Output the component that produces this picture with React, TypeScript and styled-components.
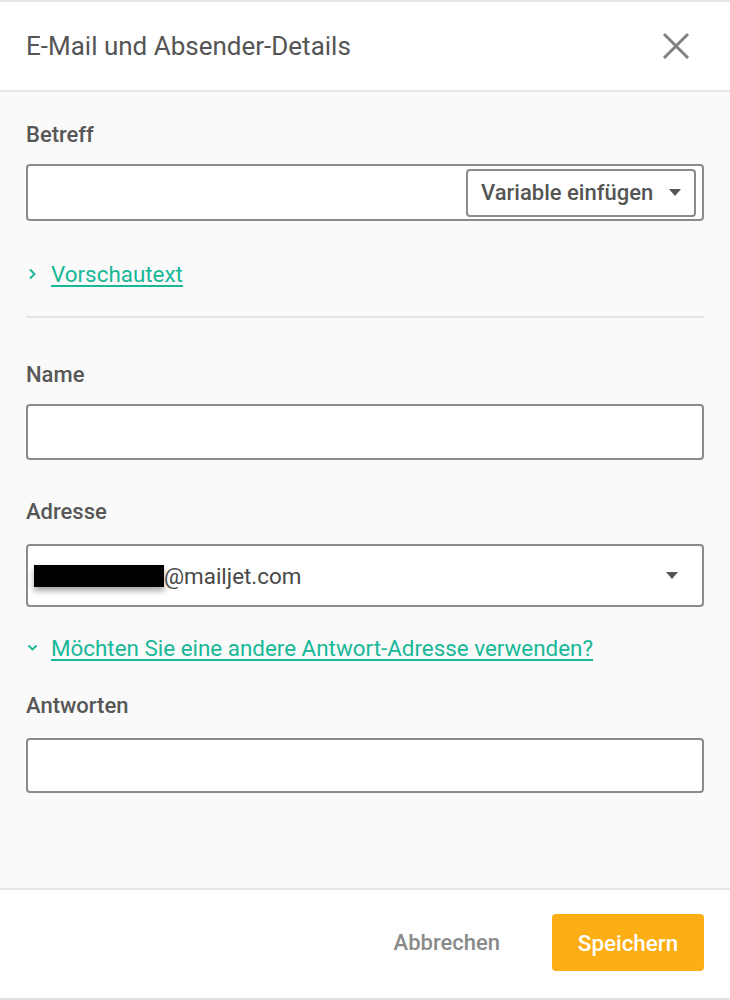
import React from "react";
import styled, { createGlobalStyle } from "styled-components";

const Global = createGlobalStyle`
  html, body { margin: 0; padding: 0; background: #ffffff; }
  body { font-family: Roboto, "Noto Sans", Arial, sans-serif; -webkit-font-smoothing: antialiased; }
  * { box-sizing: border-box; }
`;

const Modal = styled.div`
  width: 730px;
  height: 1000px;
  display: flex;
  flex-direction: column;
  background: #fafafa;
  border-top: 2px solid #e6e6e6;
  border-bottom: 2px solid #e2e2e2;
`;

const Header = styled.header`
  height: 90px;
  flex: none;
  background: #ffffff;
  border-bottom: 2px solid #e6e6e6;
  display: flex;
  align-items: center;
  justify-content: space-between;
  padding: 0 40px 0 26px;
`;

const Title = styled.h1`
  margin: 0;
  font-size: 26px;
  font-weight: 400;
  color: #555555;
`;

const CloseButton = styled.button`
  border: 0;
  background: none;
  padding: 0;
  width: 28px;
  height: 28px;
  display: flex;
  align-items: center;
  justify-content: center;
  cursor: pointer;
`;

const Body = styled.main`
  flex: 1;
  padding: 30px 26px 0 26px;
  display: flex;
  flex-direction: column;
`;

const Label = styled.label<{ $top?: number }>`
  display: block;
  margin-top: ${(p) => p.$top ?? 0}px;
  font-size: 22px;
  line-height: 26px;
  font-weight: 500;
  color: #575757;
`;

const InputBox = styled.div<{ $h: number; $gap?: number }>`
  margin-top: ${(p) => p.$gap ?? 16}px;
  height: ${(p) => p.$h}px;
  background: #ffffff;
  border: 2px solid #8b8b8b;
  border-radius: 4px;
  display: flex;
  align-items: center;
`;

const VariableButton = styled.button`
  margin-left: auto;
  margin-right: 6px;
  height: 48px;
  width: 230px;
  background: #ffffff;
  border: 2px solid #8b8b8b;
  border-radius: 4px;
  display: flex;
  align-items: center;
  justify-content: space-between;
  padding: 0 13px 0 13px;
  font-family: inherit;
  font-size: 22px;
  font-weight: 500;
  color: #555555;
`;

const Caret = styled.span`
  width: 0;
  height: 0;
  border-left: 6.5px solid transparent;
  border-right: 6.5px solid transparent;
  border-top: 7px solid #555555;
`;

const LinkRow = styled.div<{ $top: number }>`
  margin-top: ${(p) => p.$top}px;
  height: 26px;
  display: flex;
  align-items: center;
  gap: 13px;
  padding-left: 1px;
`;

const Link = styled.a`
  font-size: 22.4px;
  line-height: 26px;
  color: #17b897;
  text-decoration: underline;
  text-decoration-thickness: 2px;
  text-underline-offset: 3px;
  cursor: pointer;
`;

const Divider = styled.hr`
  margin: 29px 0 0 0;
  border: 0;
  height: 2px;
  background: #e4e4e4;
`;

const SelectText = styled.div`
  flex: 1;
  display: flex;
  align-items: center;
  padding-left: 6px;
  font-size: 22.4px;
  color: #484848;
`;

const Redacted = styled.span`
  display: inline-block;
  width: 130px;
  height: 22px;
  background: #000000;
  box-shadow: 0 4px 6px rgba(0, 0, 0, 0.35);
`;

const SelectCaret = styled(Caret)`
  margin-right: 24px;
`;

const Footer = styled.footer`
  height: 110px;
  flex: none;
  background: #ffffff;
  border-top: 2px solid #e6e6e6;
  display: flex;
  align-items: center;
  justify-content: flex-end;
  gap: 28px;
  padding: 0 26px 3px 26px;
`;

const CancelButton = styled.button`
  border: 0;
  background: none;
  font-family: inherit;
  font-size: 22px;
  font-weight: 500;
  color: #8a8a8a;
  padding: 0 24px;
  cursor: pointer;
`;

const SaveButton = styled.button`
  width: 152px;
  height: 57px;
  border: 0;
  border-radius: 4px;
  background: #fdae14;
  color: #ffffff;
  font-family: inherit;
  font-size: 22.4px;
  font-weight: 500;
  cursor: pointer;
`;

const Chevron = ({ down }: { down?: boolean }) =>
  down ? (
    <svg width="11" height="10" viewBox="0 0 11 10" fill="none">
      <path d="M1.5 2.5 L5.5 6.5 L9.5 2.5" stroke="#17b897" strokeWidth="1.9" />
    </svg>
  ) : (
    <svg width="11" height="12" viewBox="0 0 11 12" fill="none">
      <path d="M3 1.5 L7.5 6 L3 10.5" stroke="#17b897" strokeWidth="1.9" />
    </svg>
  );

export default function App() {
  return (
    <>
      <Global />
      <Modal>
        <Header>
          <Title>E-Mail und Absender-Details</Title>
          <CloseButton aria-label="Schließen">
            <svg width="28" height="28" viewBox="0 0 28 28">
              <path d="M2 2 L26 26 M26 2 L2 26" stroke="#808080" strokeWidth="3" />
            </svg>
          </CloseButton>
        </Header>
        <Body>
          <Label>Betreff</Label>
          <InputBox $h={57}>
            <VariableButton>
              Variable einfügen
              <Caret />
            </VariableButton>
          </InputBox>
          <LinkRow $top={40}>
            <Chevron />
            <Link>Vorschautext</Link>
          </LinkRow>
          <Divider />
          <Label $top={44}>Name</Label>
          <InputBox $h={56} />
          <Label $top={39}>Adresse</Label>
          <InputBox $h={63} $gap={19}>
            <SelectText>
              <Redacted />
              @mailjet.com
            </SelectText>
            <SelectCaret />
          </InputBox>
          <LinkRow $top={28}>
            <Chevron down />
            <Link>Möchten Sie eine andere Antwort-Adresse verwenden?</Link>
          </LinkRow>
          <Label $top={32}>Antworten</Label>
          <InputBox $h={55} $gap={19} />
        </Body>
        <Footer>
          <CancelButton>Abbrechen</CancelButton>
          <SaveButton>Speichern</SaveButton>
        </Footer>
      </Modal>
    </>
  );
}
